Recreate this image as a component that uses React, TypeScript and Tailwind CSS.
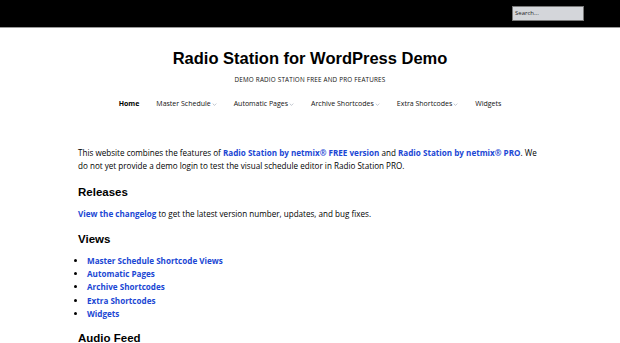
const NAV = [
  { label: "Home", active: true },
  { label: "Master Schedule", sub: true },
  { label: "Automatic Pages", sub: true },
  { label: "Archive Shortcodes", sub: true },
  { label: "Extra Shortcodes", sub: true },
  { label: "Widgets" },
];

const VIEWS = [
  "Master Schedule Shortcode Views",
  "Automatic Pages",
  "Archive Shortcodes",
  "Extra Shortcodes",
  "Widgets",
];

const body = "font-['Open_Sans','Noto_Sans',sans-serif]";
const heading = "font-['Liberation_Sans',Arial,sans-serif] font-bold text-black";
const link = "font-bold text-[#1b47d4]";

function Chevron() {
  return (
    <svg viewBox="0 0 8 5" className="ml-[1px] h-[3px] w-[5px] text-gray-400" fill="none" stroke="currentColor" strokeWidth="1">
      <path d="M1 1l3 3 3-3" />
    </svg>
  );
}

export default function App() {
  return (
    <div className={`h-[343px] w-[620px] overflow-hidden bg-white ${body}`}>
      <div className="flex h-[28px] items-center justify-end border-b border-[#9a9a9a] bg-black pr-[36px]">
        <div className="flex h-[15px] w-[72px] items-center border border-[#777] bg-[#d4d6da] px-[2px] text-[6px] text-[#222]">
          Search...
        </div>
      </div>

      <header className="flex flex-col items-center pt-[20px]">
        <h1 className={`${heading} text-[16.5px] leading-[20px]`}>Radio Station for WordPress Demo</h1>
        <p className="mt-[7px] text-[6.3px] uppercase tracking-[0.2px] text-[#111]">
          Demo Radio Station Free and Pro Features
        </p>
        <nav className="mt-[15px] flex items-center gap-[17px] text-[7px] text-[#111]">
          {NAV.map((item) => (
            <span key={item.label} className={`flex items-center ${item.active ? "font-bold text-black" : ""}`}>
              {item.label}
              {item.sub && <Chevron />}
            </span>
          ))}
        </nav>
      </header>

      <main className="mx-auto mt-[36px] w-[464px] text-[8.1px] leading-[13px] text-black">
        <p>
          This website combines the features of <a className={link}>Radio Station by netmix® FREE version</a> and{" "}
          <a className={link}>Radio Station by netmix® PRO</a>. We do not yet provide a demo login to test the visual
          schedule editor in Radio Station PRO.
        </p>

        <h2 className={`${heading} mt-[13px] text-[11.5px] leading-[15px]`}>Releases</h2>
        <p className="mt-[7px]">
          <a className={link}>View the changelog</a> to get the latest version number, updates, and bug fixes.
        </p>

        <h2 className={`${heading} mt-[12px] text-[11.5px] leading-[15px]`}>Views</h2>
        <ul className="mt-[7px] list-disc pl-[9px]">
          {VIEWS.map((v) => (
            <li key={v} className="leading-[13.25px]">
              <a className={link}>{v}</a>
            </li>
          ))}
        </ul>

        <h2 className={`${heading} mt-[11px] text-[11.5px] leading-[15px]`}>Audio Feed</h2>
      </main>
    </div>
  );
}
